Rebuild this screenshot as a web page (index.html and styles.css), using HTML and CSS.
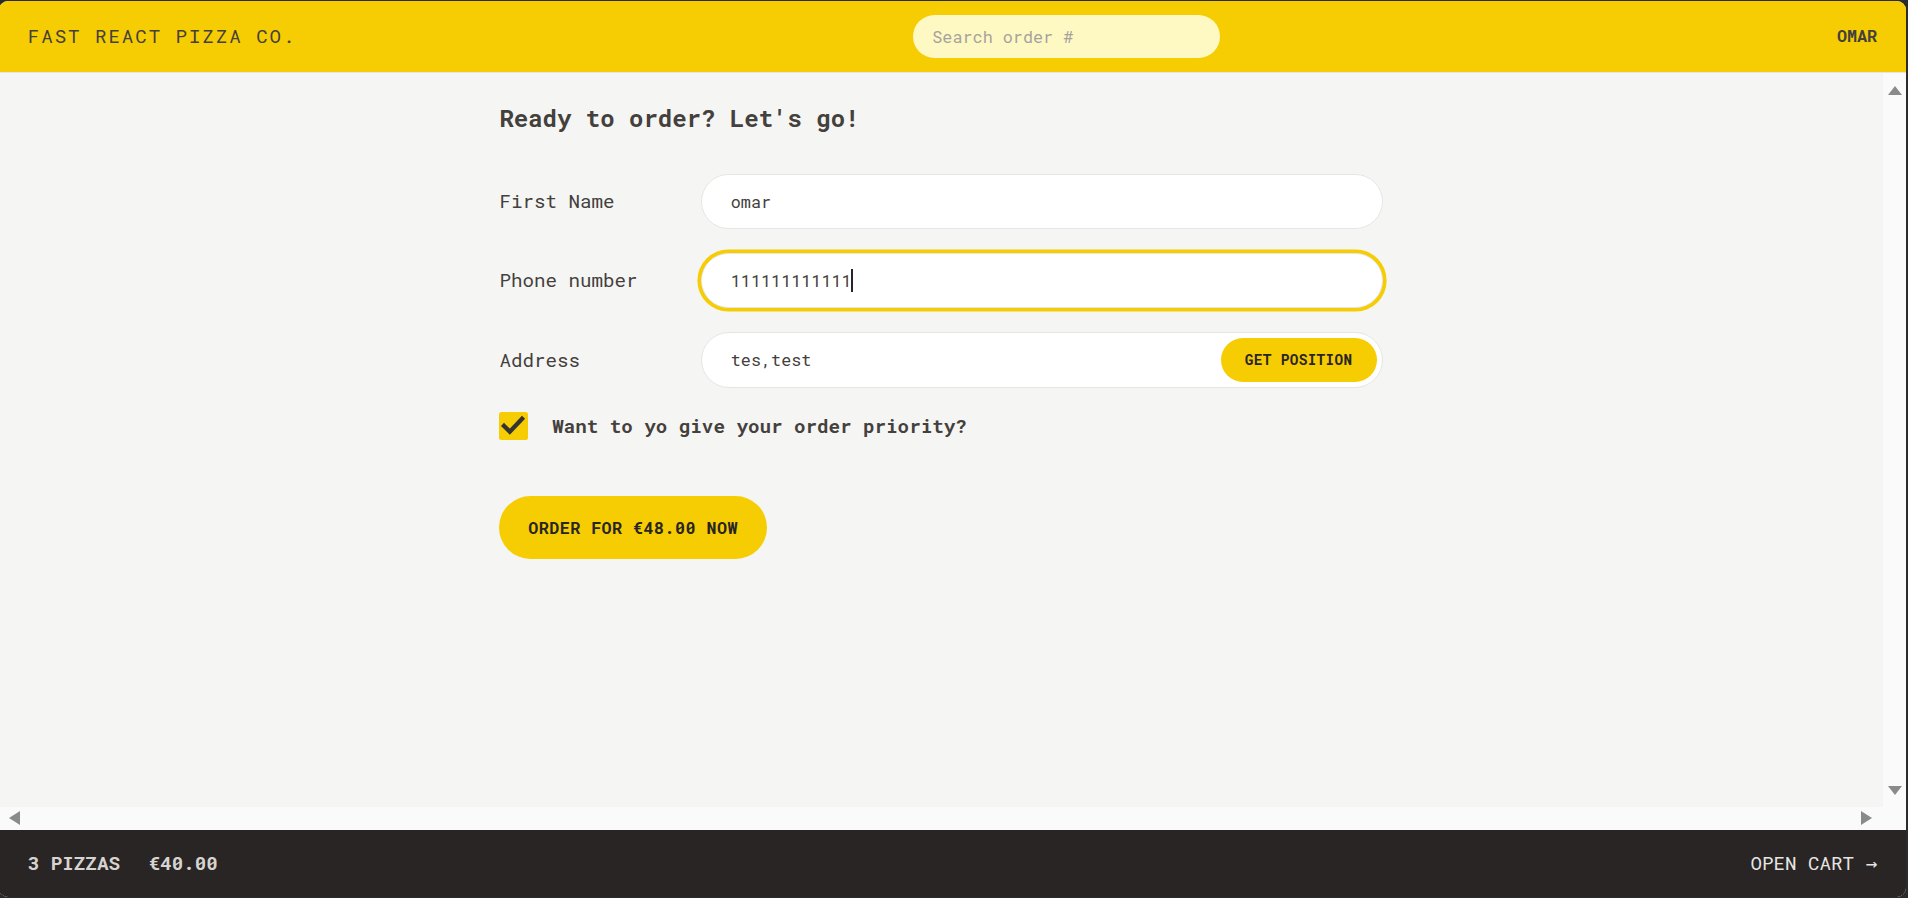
FILE: index.html
```html
<!DOCTYPE html>
<html lang="en">
<head>
<meta charset="utf-8">
<title>Fast React Pizza Co.</title>
<link rel="stylesheet" href="styles.css">
</head>
<body>
<div class="window">
  <div class="app">
    <header class="header">
      <a class="logo" href="#">Fast React Pizza Co.</a>
      <form class="search-form">
        <input class="search" type="text" placeholder="Search order #">
      </form>
      <div class="username">omar</div>
    </header>

    <div class="main">
      <div class="viewport">
        <div class="container">
          <h2 class="title">Ready to order? Let's go!</h2>
          <form class="order-form">
            <div class="row">
              <label class="label">First Name</label>
              <input class="input" type="text" value="omar">
            </div>
            <div class="row">
              <label class="label">Phone number</label>
              <div class="input focused">111111111111<span class="caret"></span></div>
            </div>
            <div class="row">
              <label class="label">Address</label>
              <div class="field">
                <input class="input" type="text" value="tes,test">
                <button class="btn-small" type="button">Get position</button>
              </div>
            </div>
            <div class="check-row">
              <span class="checkbox">
                <svg viewBox="0 0 24 24" width="24" height="24"><path d="M4.2 11.6 L9 16.4 L19.2 5.6" fill="none" stroke="#333" stroke-width="3.6" stroke-linecap="square"/></svg>
              </span>
              <label class="check-label">Want to yo give your order priority?</label>
            </div>
            <div>
              <button class="btn-primary" type="button">Order for €48.00 now</button>
            </div>
          </form>
        </div>
      </div>
      <div class="vbar"><span class="tri up"></span><span class="tri down"></span></div>
      <div class="hbar"><span class="tri left"></span><span class="tri right"></span></div>
      <div class="corner"></div>
    </div>

    <footer class="footer">
      <p class="summary"><span>3 pizzas</span><span>€40.00</span></p>
      <a class="open-cart" href="#">Open cart →</a>
    </footer>
  </div>
</div>
</body>
</html>
```
FILE: styles.css
```css
* { box-sizing: border-box; }

html, body {
  margin: 0;
  padding: 0;
  background: #ffffff;
}

body {
  font-family: "Roboto Mono", "DejaVu Sans Mono", monospace;
  color: #44403c;
  font-size: 19.2px;
  line-height: 28.8px;
}

.window {
  width: 1909px;
  height: 898px;
  margin-left: -1px;
  background: #2b2b2b;
  padding: 1px 2px 1px 0;
}

.app {
  height: 100%;
  border-radius: 9px;
  overflow: hidden;
  display: grid;
  grid-template-rows: auto 1fr auto;
  background: #f5f5f4;
}

/* header */
.header {
  display: flex;
  align-items: center;
  justify-content: space-between;
  background: #f6cd02;
  padding: 14px 28.8px;
  border-bottom: 1px solid #e7e5e4;
  text-transform: uppercase;
}

.logo {
  color: #44403c;
  text-decoration: none;
  letter-spacing: 0.1em;
}

.search-form { margin: 0; display: flex; }

.search {
  width: 307.2px;
  height: 43.2px;
  border: none;
  border-radius: 999px;
  background: #fef9c3;
  padding: 0 19.2px;
  font-family: inherit;
  font-size: 16.8px;
  color: #44403c;
  outline: none;
}
.search::placeholder { color: #a8a29e; }

.username {
  font-size: 16.8px;
  font-weight: 700;
  color: #44403c;
}

/* main area with scrollbars */
.main {
  min-height: 0;
  display: grid;
  grid-template-columns: 1fr 23px;
  grid-template-rows: 1fr 23px;
}

.viewport {
  overflow: hidden;
  background: #f5f5f4;
}

.container {
  max-width: 921.6px;
  margin: 0 auto;
  padding: 28.8px 19.2px;
}

.title {
  margin: 0 0 38.4px;
  font-size: 24px;
  line-height: 33.6px;
  font-weight: 700;
  color: #44403c;
}

.order-form { margin: 0; }

.row {
  display: flex;
  align-items: center;
  gap: 9.6px;
  margin-bottom: 24px;
}

.label {
  flex: 0 0 192px;
}

.input {
  flex: 1 1 auto;
  width: 100%;
  height: 55.2px;
  border: 1.2px solid #e7e5e4;
  border-radius: 999px;
  background: #ffffff;
  padding: 14.4px 28.8px;
  font-family: inherit;
  font-size: 16.8px;
  line-height: 24px;
  color: #44403c;
  outline: none;
}

.focused {
  box-shadow: 0 0 0 3.6px #f6cd02;
  display: flex;
  align-items: center;
}

.caret {
  display: inline-block;
  width: 2px;
  height: 23px;
  margin-left: -1px;
  background: #292524;
}

.field {
  position: relative;
  flex: 1 1 auto;
}

.btn-small {
  position: absolute;
  top: 6px;
  right: 6px;
  height: 43.2px;
  border: none;
  border-radius: 999px;
  background: #f6cd02;
  padding: 12px 24px;
  font-family: inherit;
  font-size: 14.4px;
  line-height: 19.2px;
  font-weight: 700;
  letter-spacing: 0.025em;
  text-transform: uppercase;
  color: #292524;
}

.check-row {
  display: flex;
  align-items: center;
  gap: 24px;
  margin-bottom: 56px;
}

.checkbox {
  width: 28.8px;
  height: 28.8px;
  border-radius: 2.5px;
  background: #f6cd02;
  display: flex;
  align-items: center;
  justify-content: center;
}
.checkbox svg { width: 28.8px; height: 28.8px; display: block; }

.check-label { font-weight: 700; }

.btn-primary {
  border: none;
  border-radius: 999px;
  background: #f6cd02;
  padding: 19.2px 28.8px;
  font-family: inherit;
  font-size: 16.8px;
  line-height: 24px;
  font-weight: 700;
  letter-spacing: 0.025em;
  text-transform: uppercase;
  color: #292524;
}

/* fake classic scrollbars */
.vbar, .hbar, .corner { background: #fafafa; }

.vbar {
  display: flex;
  flex-direction: column;
  justify-content: space-between;
  align-items: center;
  padding: 13px 0 12px;
}

.hbar {
  display: flex;
  align-items: center;
  justify-content: space-between;
  padding: 0 11px 0 10px;
}

.tri { display: block; width: 0; height: 0; }
.tri.up { border-left: 7px solid transparent; border-right: 7px solid transparent; border-bottom: 9px solid #8a8a8a; }
.tri.down { border-left: 7px solid transparent; border-right: 7px solid transparent; border-top: 9px solid #8a8a8a; }
.tri.left { border-top: 7px solid transparent; border-bottom: 7px solid transparent; border-right: 11px solid #8a8a8a; }
.tri.right { border-top: 7px solid transparent; border-bottom: 7px solid transparent; border-left: 11px solid #8a8a8a; }

/* footer */
.footer {
  display: flex;
  align-items: center;
  justify-content: space-between;
  background: #292524;
  color: #e7e5e4;
  padding: 19.2px 28.8px;
  text-transform: uppercase;
}

.summary {
  margin: 0;
  display: flex;
  gap: 28.8px;
  font-weight: 700;
  color: #d6d3d1;
}

.open-cart {
  color: #e7e5e4;
  text-decoration: none;
}
```
